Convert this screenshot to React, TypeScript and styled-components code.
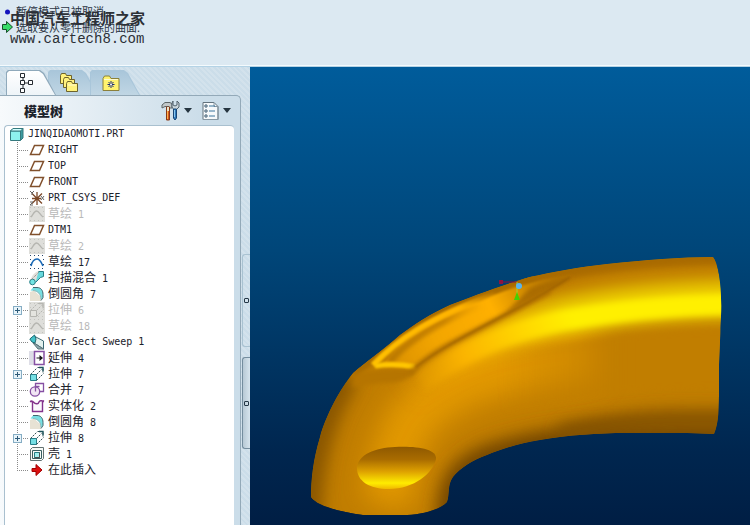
import React from "react";
import styled, { createGlobalStyle, css } from "styled-components";

const cjk = `"Noto Sans CJK SC", "Noto Sans", sans-serif`;
const mono = `"DejaVu Sans Mono", "Liberation Mono", monospace`;

const GlobalStyle = createGlobalStyle`
  * { box-sizing: border-box; }
  body { margin: 0; font-family: ${cjk}; font-size: 12px; color: #1c222b; }
  button { margin: 0; padding: 0; border: 0; background: none; font: inherit; color: inherit; }
  svg { display: block; }
`;

const stripes = css`
  background: repeating-linear-gradient(45deg, #d3e2ec 0 2px, #cbdde9 2px 4px);
`;

const Shell = styled.div`
  display: grid;
  grid-template-rows: auto 1fr;
  min-height: 100vh;
`;

const MessageArea = styled.header`
  position: relative;
  min-height: 67px;
  padding: 3px 2px;
  background: #dce9f2;
  border-bottom: 1px solid #b4d3e6;
  box-shadow: inset 0 -1px #f4fafd;
`;

const Message = styled.p`
  display: flex;
  align-items: center;
  gap: 3px;
  height: 16px;
  margin: 0;
  font-size: 11px;
  line-height: 16px;
  color: #2b3442;
`;

const Watermark = styled.div`
  position: absolute;
  top: 8px;
  left: 10px;
  color: #2c3036;
`;

const WatermarkTitle = styled.strong`
  display: block;
  font-size: 15px;
  line-height: 20px;
  font-weight: 700;
`;

const WatermarkUrl = styled.span`
  display: block;
  font-family: "Liberation Mono", monospace;
  font-size: 14px;
  line-height: 22px;
`;

const Workspace = styled.main`
  display: flex;
  min-height: 0;
`;

const Navigator = styled.aside`
  display: flex;
  flex: 0 0 250px;
  flex-direction: column;
  padding-top: 3px;
  ${stripes}
`;

const TabBar = styled.nav`
  display: flex;
  height: 25px;
  padding-left: 6px;
`;

const Tab = styled.button<{ $active?: boolean }>`
  position: relative;
  z-index: ${(p) => (p.$active ? 1 : 0)};
  display: flex;
  align-items: center;
  justify-content: center;
  width: 50px;
  margin-right: -8px;
  padding-right: 8px;
  background: ${(p) => (p.$active ? "#8fa9bb" : "#a9c6da")};
  clip-path: polygon(0 2px, 2px 0, 34px 0, 38px 3px, 50px 100%, 0 100%);
  &::before {
    content: "";
    position: absolute;
    inset: 1px 1px 0;
    background: ${(p) =>
      p.$active ? "linear-gradient(#ffffff, #eef4f8)" : "linear-gradient(#a9c6da, #c0d6e4)"};
    clip-path: polygon(0 2px, 2px 0, 32px 0, 36px 3px, 48px 100%, 0 100%);
  }
  svg { position: relative; }
`;

const PanelRow = styled.div`
  display: flex;
  flex: 1;
`;

const Panel = styled.section`
  display: flex;
  flex: 1;
  flex-direction: column;
  padding: 0 6px 0 4px;
  border: solid #93a9b8;
  border-width: 1px 1px 0 0;
  border-radius: 0 5px 0 0;
  background: linear-gradient(90deg, #f7fafc, #cbdde9 85%);
`;

const PanelHeader = styled.div`
  display: flex;
  align-items: center;
  height: 29px;
  padding: 0 3px 0 20px;
`;

const PanelTitle = styled.h2`
  flex: 1;
  margin: 0;
  font-size: 13px;
  line-height: 20px;
  font-weight: 900;
`;

const MenuButton = styled.button`
  display: flex;
  align-items: center;
  gap: 4px;
  margin-left: 10px;
`;

const Tree = styled.ul`
  flex: 1;
  margin: 0;
  padding: 0 0 0 4px;
  list-style: none;
  background: #fff;
  border: solid #a9c0cf;
  border-width: 1px 0 0 1px;
  border-radius: 4px 4px 0 0;
`;

const TreeRow = styled.li<{ $root?: boolean; $muted?: boolean }>`
  display: flex;
  align-items: center;
  height: 16px;
  padding-left: ${(p) => (p.$root ? "0" : "8px")};
  color: ${(p) => (p.$muted ? "#b9b9b9" : "#1c222b")};
`;

const Branch = styled.span<{ $last?: boolean }>`
  display: flex;
  align-items: center;
  width: 12px;
  height: 16px;
  background:
    ${(p) => (p.$last ? "linear-gradient(#fff, #fff) 0 9px / 1px 7px no-repeat," : "")}
    linear-gradient(#8a8a8a 50%, transparent 50%) 0 0 / 1px 2px repeat-y,
    linear-gradient(90deg, #8a8a8a 50%, transparent 50%) 0 8px / 2px 1px repeat-x;
`;

const Expander = styled.button`
  flex: none;
  width: 9px;
  height: 9px;
  margin-left: -4px;
  border: 1px solid #86adc4;
  background:
    linear-gradient(#2d5a78, #2d5a78) center / 5px 1px no-repeat,
    linear-gradient(#2d5a78, #2d5a78) center / 1px 5px no-repeat,
    #e8f4fa;
`;

const NodeName = styled.span`
  margin-left: 3px;
  font-family: ${mono};
  font-size: 10px;
  line-height: 16px;
  white-space: pre;
`;

const Han = styled.span`
  font-family: ${cjk};
  font-size: 12px;
  line-height: 14px;
`;

const SashRail = styled.div`
  display: flex;
  flex: 0 0 9px;
  flex-direction: column;
  gap: 10px;
  padding: 159px 0 0 1px;
`;

const Sash = styled.button<{ $sunken?: boolean }>`
  display: flex;
  align-items: center;
  justify-content: center;
  height: ${(p) => (p.$sunken ? "92px" : "93px")};
  border: 1px solid ${(p) => (p.$sunken ? "#748d9e" : "#a9c2d1")};
  border-right: 0;
  border-radius: 3px 0 0 3px;
  background: ${(p) => (p.$sunken ? "linear-gradient(90deg, #b7c9d5, #d6e4ed)" : "transparent")};
  &::after {
    content: "";
    width: 3px;
    height: 3px;
    border: 1px solid #243746;
    border-radius: 1px;
  }
`;

const Viewport = styled.section`
  flex: 1;
  min-width: 0;
  background: linear-gradient(#005c9b, #004679 40%, #00264f 84%, #001e44);
  svg { width: 100%; height: 100%; }
`;

type Kind =
  | "part" | "plane" | "csys" | "sketch" | "sketchOff" | "blend" | "round" | "extrude"
  | "extrudeOff" | "sweep" | "extend" | "merge" | "solidify" | "shell" | "insert";

function Dots({ color }: { color: string }) {
  return (
    <g fill={color}>
      {[1, 5, 9, 13].map((x) => <path key={x} d={`M${x} 1h1v1h-1zM${x} 14h1v1h-1z`} />)}
      <path d="M1 5h1v1h-1zM1 10h1v1h-1zM14 5h1v1h-1zM14 10h1v1h-1z" />
    </g>
  );
}

function Glyph({ kind }: { kind: Kind }) {
  switch (kind) {
    case "part":
      return <g stroke="#35797e"><path d="M1.500 5 4 2.500h10V12l-2.500 2.500" fill="#3d9ba0" /><path d="M1.500 5h10v9.500h-10z" fill="#8df1ee" /><path d="m1.500 5 2.500-2.500h10L11.500 5z" fill="#d4ffff" /></g>;
    case "plane":
      return <path d="M5.500 3.500H14.500L10.500 12.500H1.500z" fill="none" stroke="#81502c" strokeWidth="1.500" />;
    case "csys":
      return <g fill="none" stroke="#7b4828" strokeWidth="1.300"><path d="M8 2v13M3 3.500l10 10M13 3.500l-10 10M3 8.500h9" /><path d="m1 1 2 2 2-2M3 3v2M12 6l3 4m0-4-3 4M1 12h3l-3 3h3" stroke="#666" strokeWidth="1" /></g>;
    case "sketchOff":
      return <g><path d="M0 0h16v16H0z" fill="#dededa" /><Dots color="#c3c3bf" /><path d="M2 11C4 9 5 5 7.500 5S11 9 14 11" fill="none" stroke="#b5b5b0" strokeWidth="1.300" /></g>;
    case "sketch":
      return <g><Dots color="#27456e" /><path d="M2 12C3 8 5 5 8 5s4 3 6 7" fill="none" stroke="#1767b5" strokeWidth="1.600" /></g>;
    case "blend":
      return <g><path d="M2 9C3 5 6 2 10 1l2 6-6 4z" fill="#e3e1dc" /><path d="M9.500 1.500h5v5l-3 1-5 5" fill="#68d8dc" stroke="#287f86" /><circle cx="3.500" cy="12" r="2.800" fill="#72e5e4" stroke="#287f86" /><path d="m2 10 8-8" stroke="#7a7a7a" strokeDasharray="1 1" /></g>;
    case "round":
      return <g><path d="M1 6 5 4.500 12 11v4H1z" fill="#e7e2d4" /><path d="M1.500 4.500 4 1.500h4c4 0 6 3 6 7v3l-2 2.500C12 8 9 5 1.500 4.500z" fill="#78dfe2" /><path d="M4 1.500h4c4 0 6 3 6 7v3l-2 3" fill="none" stroke="#42636b" /><path d="M4 4.500c5 0 8 4 8 9" fill="none" stroke="#95b8ba" /></g>;
    case "extrude":
    case "extrudeOff": {
      const off = kind === "extrudeOff";
      return <g>{off && <><path d="M0 0h16v16H0z" fill="#dededa" /><Dots color="#c5c5c0" /></>}<path d="M1.500 8.500h6v6h-6z" fill={off ? "#e4e4df" : "#75dfe4"} stroke={off ? "#b5b5b0" : "#277e88"} /><path d="m1.500 8.500 7-7m-1 7 5-5m-5 11 7-7M9 1.500h5v5" fill="none" stroke={off ? "#b7b7b2" : "#345158"} strokeDasharray="2 1" /><path d="m10 1.500h4v4" fill="none" stroke={off ? "#b7b7b2" : "#1e555c"} strokeWidth="1.400" /></g>;
    }
    case "sweep":
      return <g><path d="M5 2 14.500 7v8L5 9z" fill="#e3f1ee" stroke="#3b6973" /><path d="m5 9 9.500 6H9L4 9z" fill="#8fa9ad" stroke="#5b7479" /><path d="m.8 5 4.700-4 1.500 4-1 4-3-1z" fill="#43c3ca" stroke="#216a72" /></g>;
    case "extend":
      return <g><path d="M0 1h7v14H0z" fill="#dedee7" /><path d="M5.500 1.500h9.500v13H5.500z" fill="#fff" stroke="#8650a3" strokeWidth="1.500" /><path d="M7.500 7.500h3V5l3.500 3-3.500 3V8.500h-3z" fill="#151515" /></g>;
    case "merge":
      return <g fill="none" stroke="#8650a3" strokeWidth="1.300"><path d="M6.500 1.500h8v8h-8z" /><circle cx="6" cy="9.500" r="4.700" fill="#f1e5f4" /><path d="M6.500 9.500v-5h4" /></g>;
    case "solidify":
      return <path d="M1 3.500h2.500v10h10v-10H15M1 3.500c3-2 4 2 5.500 2S9 7 10 4s3 0 5-1.500" fill="#fbf8fc" stroke="#84338c" strokeWidth="1.400" />;
    case "shell":
      return <g fill="none"><path d="m1.500 3.500 2-2h11v11l-2 2h-11z" fill="#f8faf7" stroke="#627171" /><path d="M3.500 4.500h9v8h-9z" stroke="#385e60" /><path d="M5.500 6.500h5v5h-5z" fill="#a2eeee" stroke="#277c83" /><path d="M5.500 11.500h5v-5" stroke="#4c5151" /></g>;
    case "insert":
      return <path d="M3 6.500h4v-4l6 5.500-6 5.500v-4H3z" fill="#dc1010" stroke="#a40000" />;
  }
}

function NodeIcon({ kind }: { kind: Kind }) {
  return <svg width="16" height="16" viewBox="0 0 16 16" aria-hidden="true"><Glyph kind={kind} /></svg>;
}

const nodes: { name: string; kind: Kind; muted?: boolean; expandable?: boolean }[] = [
  { name: "RIGHT", kind: "plane" },
  { name: "TOP", kind: "plane" },
  { name: "FRONT", kind: "plane" },
  { name: "PRT_CSYS_DEF", kind: "csys" },
  { name: "草绘 1", kind: "sketchOff", muted: true },
  { name: "DTM1", kind: "plane" },
  { name: "草绘 2", kind: "sketchOff", muted: true },
  { name: "草绘 17", kind: "sketch" },
  { name: "扫描混合 1", kind: "blend" },
  { name: "倒圆角 7", kind: "round" },
  { name: "拉伸 6", kind: "extrudeOff", muted: true, expandable: true },
  { name: "草绘 18", kind: "sketchOff", muted: true },
  { name: "Var Sect Sweep 1", kind: "sweep" },
  { name: "延伸 4", kind: "extend" },
  { name: "拉伸 7", kind: "extrude", expandable: true },
  { name: "合并 7", kind: "merge" },
  { name: "实体化 2", kind: "solidify" },
  { name: "倒圆角 8", kind: "round" },
  { name: "拉伸 8", kind: "extrude", expandable: true },
  { name: "壳 1", kind: "shell" },
  { name: "在此插入", kind: "insert" },
];

function NodeLabel({ text }: { text: string }) {
  return (
    <NodeName>
      {text.split(/([\u4e00-\u9fff]+)/).filter(Boolean).map((run, i) =>
        /[\u4e00-\u9fff]/.test(run) ? <Han key={i}>{run}</Han> : run
      )}
    </NodeName>
  );
}

function Caret() {
  return <svg width="8" height="5" viewBox="0 0 8 5" aria-hidden="true"><path d="M0 0h8L4 5z" fill="#263540" /></svg>;
}

function TreeTabIcon() {
  return <svg width="14" height="20" viewBox="0 0 14 20" fill="#fff" stroke="#252b31"><path d="M3 5v10M5 10h4" /><path d="M.5.5h4v4h-4zM.5 7.500h4v4h-4zM.5 15.500h4v4h-4zM8.500 7.500h4v4h-4z" /></svg>;
}

function FoldersIcon() {
  return (
    <svg width="19" height="20" viewBox="0 0 19 20" fill="#fff27d" stroke="#6d632c">
      {[0, 3, 6].map((d) => <path key={d} d={`M${d + 0.5} ${d + d / 3 + 2.5}l1-2h4l1 2h5v8h-11z`} />)}
      <path d="M8 12h8" stroke="#fffbd0" />
    </svg>
  );
}

function FavoriteFolderIcon() {
  return (
    <svg width="18" height="16" viewBox="0 0 18 16">
      <path d="M1 3.500 2.500 1h5L9 3.500h8v12H1z" fill="#fff36e" stroke="#8b803b" />
      <path d="M2 4.500h14" stroke="#fffbd0" />
      <path d="M9 6v7M5.500 9.500h7M6.500 7l5 5M11.500 7l-5 5" stroke="#192a77" />
      <circle cx="9" cy="9.500" r="1" fill="#fff" />
    </svg>
  );
}

function ToolsIcon() {
  return (
    <svg width="19" height="21" viewBox="0 0 19 21">
      <path d="M1 5 4 2.500h5l2 1.500v4H8.500L8 6.500H4L1 8z" fill="#c2c8c9" stroke="#5c6567" />
      <path d="M5.500 7h3v13h-3z" fill="#d85720" stroke="#873a19" />
      <path d="M6 7h2v4H6z" fill="#eee5c8" /><path d="M6 11h1v8H6z" fill="#ffb34d" />
      <path d="M12 1v4l2 1 2-1V1l2 2v4l-3 3h-2l-2-3V3z" fill="#ccd7dc" stroke="#51616c" />
      <path d="M12.500 9h3v9l-1.500 2-1.500-2z" fill="#337dbe" stroke="#174575" />
      <path d="M13 10h1v7h-1z" fill="#8bc6ee" />
    </svg>
  );
}

function SettingsIcon() {
  return (
    <svg width="17" height="20" viewBox="0 0 17 20">
      <path d="M1 1.500h11l4 4v13H1z" fill="#f6f9fb" stroke="#62727d" />
      <path d="M12 1.500v4h4M1 18.500h15V6" fill="none" stroke="#8798a4" />
      {[5, 10, 15].map((y) => <g key={y}><circle cx="4" cy={y} r="1.200" fill="#fff" stroke="#32526a" /><path d={`M7 ${y}h6`} stroke="#3b759d" /></g>)}
    </svg>
  );
}

function ElbowModel() {
  const body =
    "M713 257C680 257 646 260 607 264 580 267 552 272 530 277 505 284 470 297 450 305 430 314 415 324 400 335 383 350 366 362 353 373 340 389 326 415 320 437 313 460 311 480 311 497 317 506 340 512 363 515H407C425 514 441 509 447 502 450 494 447 486 453 477 460 468 473 460 487 455 502 449 520 443 540 440 570 435 596 433 627 433H687L714 434C719 423 719 406 719 390V365L721 317C722 286 719 265 713 257Z";
  const blurs = [1, 2, 3, 8, 14];
  return (
    <svg viewBox="250 67 500 458" preserveAspectRatio="xMidYMid slice" role="img" aria-label="JINQIDAOMOTI">
      <defs>
        <clipPath id="bodyClip"><path d={body} /></clipPath>
        {blurs.map((b) => (
          <filter key={b} id={`soft${b}`} filterUnits="userSpaceOnUse" x="200" y="180" width="620" height="420">
            <feGaussianBlur stdDeviation={b} />
          </filter>
        ))}
        <linearGradient id="ridge" gradientUnits="userSpaceOnUse" x1="400" y1="400" x2="570" y2="315">
          <stop offset="0" stopColor="#e59b00" stopOpacity="0" />
          <stop offset=".4" stopColor="#ffb800" stopOpacity=".8" />
          <stop offset=".75" stopColor="#ffd800" />
          <stop offset="1" stopColor="#fff000" />
        </linearGradient>
        <linearGradient id="flank" gradientUnits="userSpaceOnUse" x1="500" y1="0" x2="640" y2="0">
          <stop offset="0" stopColor="#c17e00" stopOpacity="0" /><stop offset="1" stopColor="#c17e00" />
        </linearGradient>
        <linearGradient id="hole" x1="0" y1="0" x2="0" y2="1">
          <stop offset="0" stopColor="#8f5900" /><stop offset=".3" stopColor="#a96c00" /><stop offset=".58" stopColor="#dda000" /><stop offset=".86" stopColor="#ffec00" /><stop offset="1" stopColor="#f0b800" />
        </linearGradient>
        <linearGradient id="pocket" gradientUnits="userSpaceOnUse" x1="395" y1="365" x2="560" y2="275">
          <stop offset="0" stopColor="#dc9200" /><stop offset=".25" stopColor="#f2a500" /><stop offset=".6" stopColor="#ffb000" /><stop offset=".8" stopColor="#d08a00" /><stop offset="1" stopColor="#b37300" />
        </linearGradient>
        <linearGradient id="lip" gradientUnits="userSpaceOnUse" x1="375" y1="362" x2="500" y2="292">
          <stop offset="0" stopColor="#ffc000" /><stop offset=".7" stopColor="#ffb200" /><stop offset="1" stopColor="#f0a300" stopOpacity="0" />
        </linearGradient>
        <linearGradient id="lipShade" gradientUnits="userSpaceOnUse" x1="385" y1="362" x2="490" y2="302">
          <stop offset="0" stopColor="#b87700" /><stop offset=".6" stopColor="#c98300" /><stop offset="1" stopColor="#f0a300" stopOpacity="0" />
        </linearGradient>
      </defs>
      <g clipPath="url(#bodyClip)">
        <path d={body} fill="#c07d00" />
        <path d="M600 355C490 365 440 385 412 420 394 445 390 490 386 505" fill="none" stroke="#e89e00" strokeWidth="50" filter="url(#soft14)" opacity=".85" />
        <path d="M345 375C320 415 307 460 306 520" fill="none" stroke="#8a5700" strokeWidth="32" filter="url(#soft8)" />
        <path d="M449 540C447 484 459 471 487 458 530 443 580 437 630 437H730" fill="none" stroke="#744700" strokeWidth="27" filter="url(#soft8)" />
        <path d="M520 280C580 267 650 258 730 257" fill="none" stroke="#a96b00" strokeWidth="15" filter="url(#soft3)" />
        <path d="M740 299C667 300 607 307 560 317 495 332 450 352 405 392" fill="none" stroke="url(#ridge)" strokeWidth="38" opacity=".7" filter="url(#soft8)" />
        <path d="M740 359C650 359 590 365 500 383" fill="none" stroke="url(#flank)" strokeWidth="58" filter="url(#soft3)" />
        <path d="M740 304C667 305 607 312 560 321 495 335 460 355 420 382" fill="none" stroke="url(#ridge)" strokeWidth="21" filter="url(#soft3)" />
        <path d="M560 436C610 422 660 418 740 420" fill="none" stroke="#855300" strokeWidth="20" filter="url(#soft8)" />
        <path d="M353 373C378 353 408 329 440 310 470 297 500 285 535 276" fill="none" stroke="#a86a00" strokeWidth="11" filter="url(#soft2)" />
        <path d="M383 365C400 340 438 315 480 301 510 288 540 279 574 275 550 291 512 309 482 326 450 342 430 356 414 368Z" fill="url(#pocket)" filter="url(#soft1)" />
        <path d="M389 362C404 344 434 323 480 305" fill="none" stroke="url(#lipShade)" strokeWidth="7" filter="url(#soft2)" />
        <path d="M373 365C397 340 430 317 495 294" fill="none" stroke="url(#lip)" strokeWidth="6" filter="url(#soft1)" />
        <path d="M358 373C375 369 395 369 414 369L419 367C411 378 401 384 382 383L352 387Z" fill="#b67500" filter="url(#soft2)" />
        <path d="M375 366C387 364 400 364 415 367" fill="none" stroke="#ffc600" strokeWidth="5" filter="url(#soft1)" />
        <path d="M505 314C530 301 553 291 573 277 560 278 545 281 530 288Z" fill="#aa6c00" filter="url(#soft2)" />
        <path d="M409 375C418 364 430 355 450 344 482 327 516 310 550 291" fill="none" stroke="#b27200" strokeWidth="5" filter="url(#soft2)" />
        <path d="M416 367C430 356 450 344 484 326 516 309 548 292 570 277" fill="none" stroke="#8f5700" strokeWidth="1" filter="url(#soft1)" />
        <path d="M357 468C358 454 375 448 395 447 417 446 437 449 436 459 433 473 414 489 389 489 369 489 357 481 357 468Z" fill="url(#hole)" />
      </g>
      <path d="M501 282h16" stroke="#8a1040" strokeWidth="1" /><path d="M499 280h4v4h-4z" fill="#8c1440" />
      <path d="M517 282v12" stroke="#9cd536" /><path d="m517 292-3 8h6z" fill="#45d000" />
      <circle cx="519" cy="286" r="3" fill="#58b4ee" />
    </svg>
  );
}

export default function App() {
  return (
    <>
      <GlobalStyle />
      <Shell>
        <MessageArea>
          <Message>
            <svg width="11" height="12" viewBox="0 0 11 12"><circle cx="5.500" cy="7" r="2.500" fill="#1414bd" /></svg>
            暂停模式已被取消。
          </Message>
          <Message>
            <svg width="11" height="12" viewBox="0 0 11 12"><path d="M.5 3.500h4V.5l6 5.500-6 5.500v-3h-4z" fill="#37dc69" stroke="#164c29" /></svg>
            选取要从零件删除的曲面.
          </Message>
          <Watermark>
            <WatermarkTitle>中国汽车工程师之家</WatermarkTitle>
            <WatermarkUrl>www.cartech8.com</WatermarkUrl>
          </Watermark>
        </MessageArea>
        <Workspace>
          <Navigator>
            <TabBar>
              <Tab $active aria-label="模型树"><TreeTabIcon /></Tab>
              <Tab aria-label="文件夹浏览器"><FoldersIcon /></Tab>
              <Tab aria-label="收藏夹"><FavoriteFolderIcon /></Tab>
            </TabBar>
            <PanelRow>
              <Panel>
                <PanelHeader>
                  <PanelTitle>模型树</PanelTitle>
                  <MenuButton aria-label="设置"><ToolsIcon /><Caret /></MenuButton>
                  <MenuButton aria-label="显示"><SettingsIcon /><Caret /></MenuButton>
                </PanelHeader>
                <Tree>
                  <TreeRow $root><NodeIcon kind="part" /><NodeLabel text="JINQIDAOMOTI.PRT" /></TreeRow>
                  {nodes.map((node, i) => (
                    <TreeRow key={node.name} $muted={node.muted}>
                      <Branch $last={i === nodes.length - 1}>
                        {node.expandable && <Expander aria-label={`展开 ${node.name}`} />}
                      </Branch>
                      <NodeIcon kind={node.kind} />
                      <NodeLabel text={node.name} />
                    </TreeRow>
                  ))}
                </Tree>
              </Panel>
              <SashRail><Sash aria-label="折叠导航器" /><Sash $sunken aria-label="调整导航器" /></SashRail>
            </PanelRow>
          </Navigator>
          <Viewport><ElbowModel /></Viewport>
        </Workspace>
      </Shell>
    </>
  );
}
